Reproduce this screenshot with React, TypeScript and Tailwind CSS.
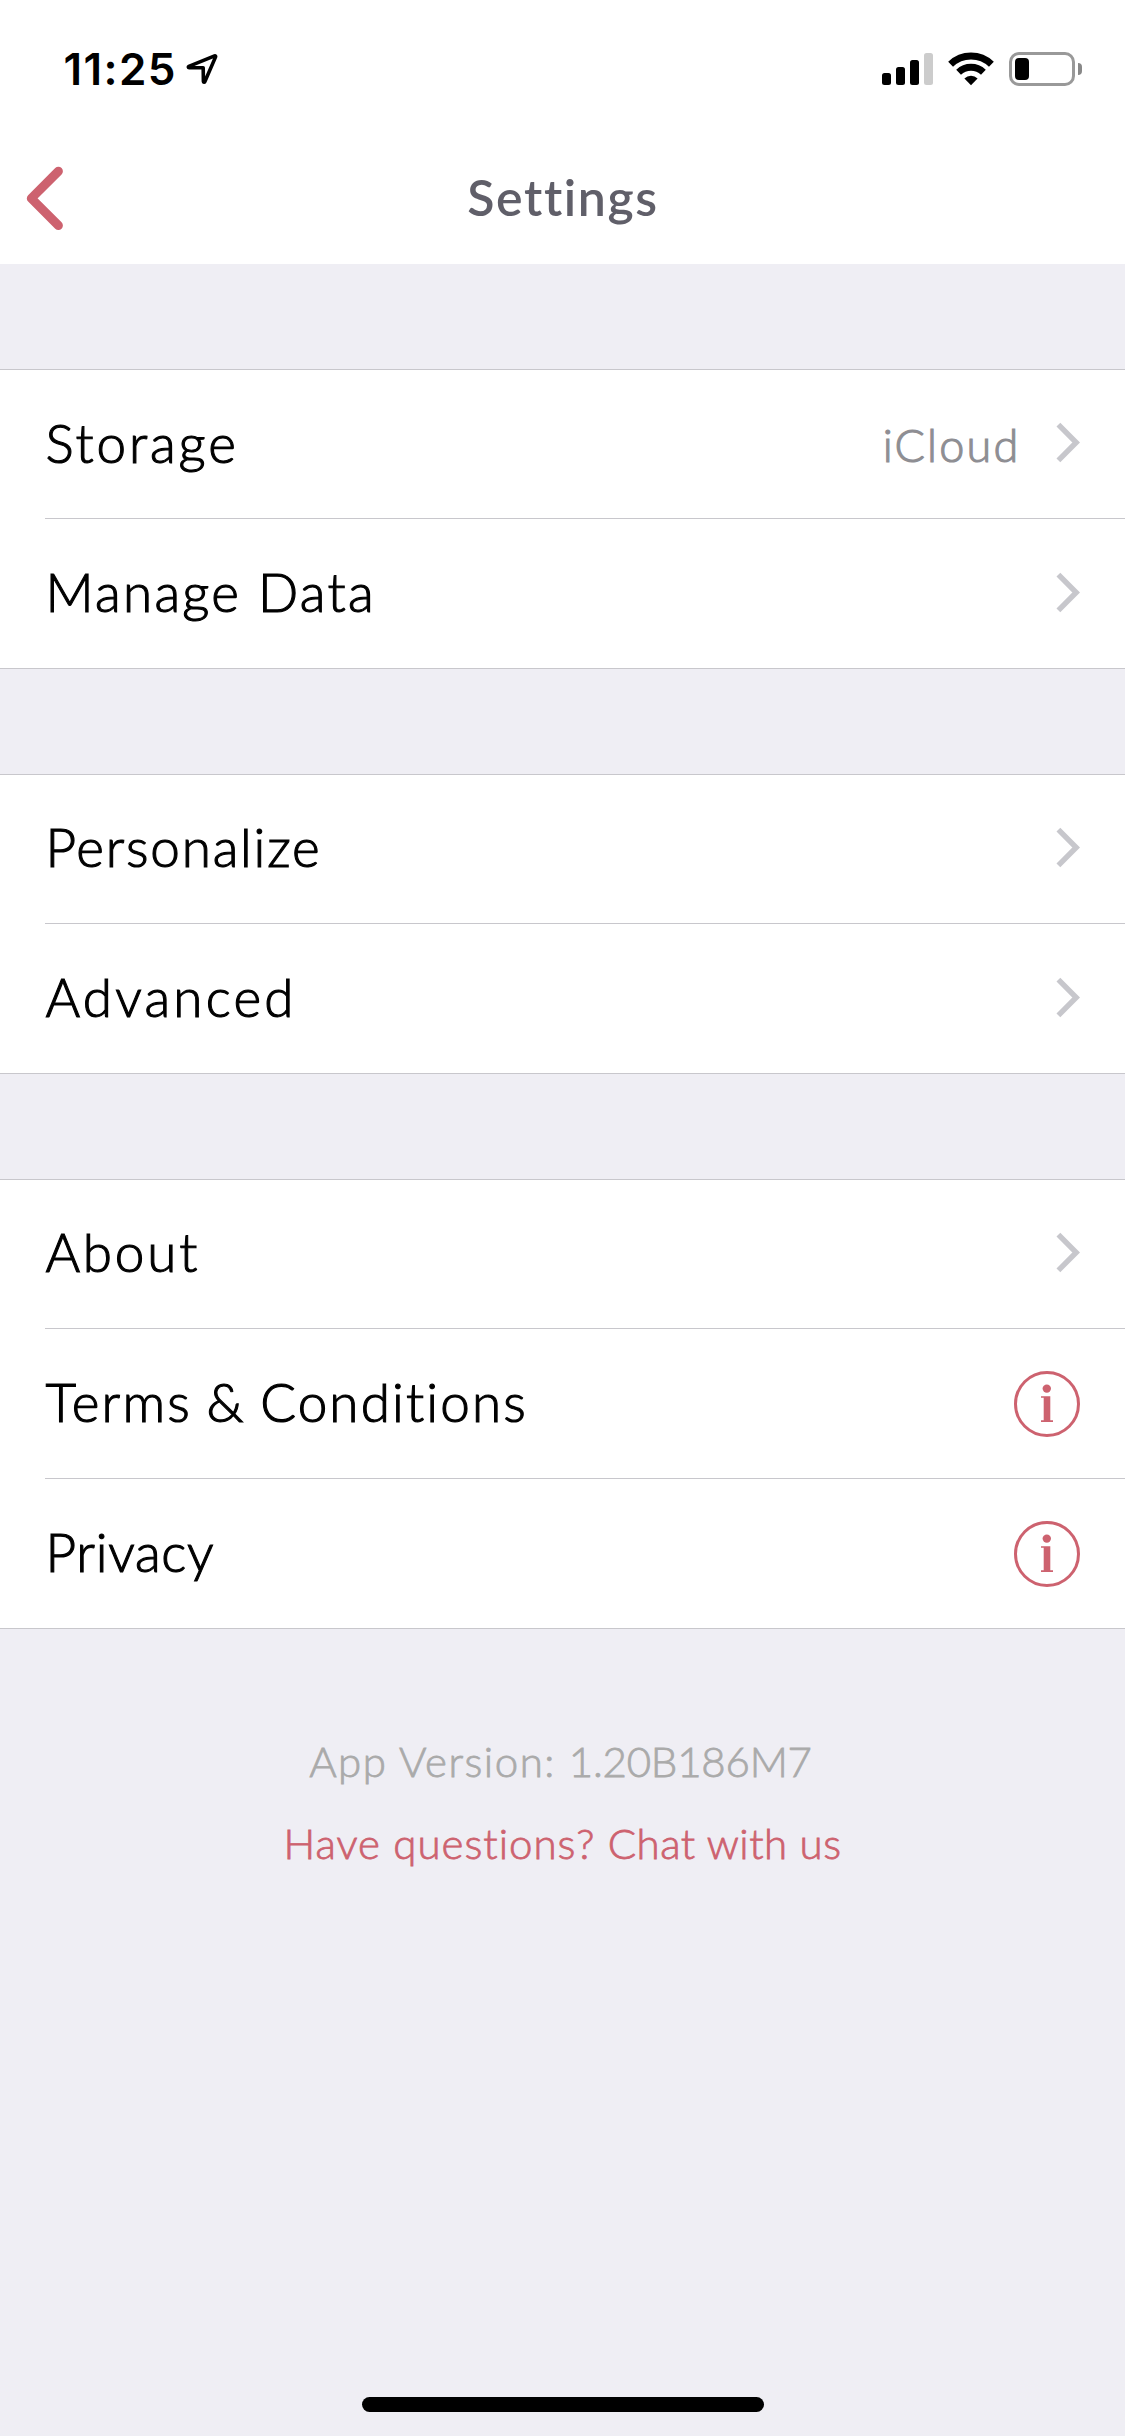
type Accessory = 'chevron' | 'info';

interface Item {
  label: string;
  labelClass: string;
  height: string;
  detail?: string;
  accessory: Accessory;
  accessoryClass: string;
}

const groups: Item[][] = [
  [
    { label: 'Storage', labelClass: 'tracking-[2.9px] leading-[145px]', height: 'h-[148px]', detail: 'iCloud', accessory: 'chevron', accessoryClass: 'mt-[52px]' },
    { label: 'Manage Data', labelClass: 'tracking-[2.3px] leading-[145px]', height: 'h-[149px]', accessory: 'chevron', accessoryClass: 'mt-[53px]' },
  ],
  [
    { label: 'Personalize', labelClass: 'tracking-[1.8px] leading-[143px]', height: 'h-[148px]', accessory: 'chevron', accessoryClass: 'mt-[52px]' },
    { label: 'Advanced', labelClass: 'tracking-[3.2px] leading-[145px]', height: 'h-[149px]', accessory: 'chevron', accessoryClass: 'mt-[53px]' },
  ],
  [
    { label: 'About', labelClass: 'tracking-[2.8px] leading-[143px]', height: 'h-[148px]', accessory: 'chevron', accessoryClass: 'mt-[52px]' },
    { label: 'Terms & Conditions', labelClass: 'tracking-[2.15px] [word-spacing:-2px] leading-[145px]', height: 'h-[149px]', accessory: 'info', accessoryClass: 'mt-[42px]' },
    { label: 'Privacy', labelClass: 'tracking-[0.7px] leading-[145px]', height: 'h-[149px]', accessory: 'info', accessoryClass: 'mt-[42px]' },
  ],
];

function Chevron({ className }: { className: string }) {
  return (
    <svg className={className} width="24" height="41" viewBox="0 0 24 41" fill="none" stroke="#c7c7cc" strokeWidth="5.4">
      <path d="M2.4 2.7 20.2 20.5 2.4 38.3" />
    </svg>
  );
}

function Info({ className }: { className: string }) {
  return (
    <svg className={className} width="66" height="66" viewBox="0 0 66 66" fill="#cd626f">
      <circle cx="33" cy="33" r="31.5" fill="none" stroke="#cd626f" strokeWidth="3" />
      <circle cx="32.8" cy="17.6" r="4.2" />
      <path d="M27 25.3h9.3V49.2H39V51H27v-1.8h2.7V26.8H27z" />
    </svg>
  );
}

function StatusBar() {
  return (
    <div className="flex h-[132px] items-start pl-[63.5px] pr-[43px]">
      <div className="pt-[15px] font-['Inter',sans-serif] text-[44px] font-semibold leading-[108px] tracking-[1.4px] text-black">11:25</div>
      <svg className="ml-[9px] mt-[53px]" width="32" height="32" viewBox="0 0 32 32" fill="none" stroke="#000" strokeWidth="3.6" strokeLinejoin="round">
        <path d="M28.6 2.9 2.8 13.4c-.8.4-.6 1.3.3 1.3l14.1.1.2 13.7c0 .9 1 1 1.4.2L29.6 3.9c.3-.7-.3-1.3-1-1z" />
      </svg>
      <div className="ml-auto mt-[52px] flex items-end">
        <div className="mb-px flex items-end gap-[5px]">
          <div className="h-[12px] w-[9px] rounded-[2.5px] bg-black" />
          <div className="h-[18px] w-[9px] rounded-[2.5px] bg-black" />
          <div className="h-[25px] w-[9px] rounded-[2.5px] bg-black" />
          <div className="h-[32px] w-[9px] rounded-[2.5px] bg-[#cccccc]" />
        </div>
        <svg className="ml-[15px]" width="46" height="34" viewBox="0 0 46 34" fill="none" stroke="#000" strokeWidth="7">
          <path d="M2.6 12.2a29.4 29.4 0 0 1 40.8 0" />
          <path d="M10.6 20.2a18.2 18.2 0 0 1 24.8 0" />
          <path d="M23 33.2 16.4 26.4a9.6 9.6 0 0 1 13.2 0z" fill="#000" stroke="none" />
        </svg>
        <div className="ml-[15px] flex items-center gap-[3px]">
          <div className="h-[34px] w-[66px] rounded-[10px] border-3 border-[#999999] p-[3px]">
            <div className="h-[22px] w-[14px] rounded-[4px] bg-black" />
          </div>
          <div className="h-[12px] w-[4px] rounded-r-full bg-[#888888]" />
        </div>
      </div>
    </div>
  );
}

function Row({ item }: { item: Item }) {
  return (
    <div className={`flex items-start pl-[45.5px] pr-[45px] ${item.height}`}>
      <span className={`flex-1 text-[53px] text-black ${item.labelClass}`}>{item.label}</span>
      {item.detail && (
        <span className="mr-[35.5px] text-[45px] leading-[151px] tracking-[2.2px] text-[#8e8e93]">{item.detail}</span>
      )}
      {item.accessory === 'chevron' ? <Chevron className={item.accessoryClass} /> : <Info className={item.accessoryClass} />}
    </div>
  );
}

export default function App() {
  return (
    <div className="flex h-[2436px] w-[1125px] flex-col overflow-hidden bg-[#efeef4] font-['Lato',sans-serif] font-light">
      <header className="h-[264px] bg-white">
        <StatusBar />
        <div className="flex h-[132px] items-start">
          <svg className="ml-[26px] mt-[34px]" width="38" height="65" viewBox="0 0 38 65" fill="none" stroke="#cd626f" strokeWidth="9" strokeLinecap="round" strokeLinejoin="round">
            <path d="M32.4 5.3 5.3 32.4l27.1 27.1" />
          </svg>
          <h1 className="-ml-[63px] flex-1 text-center text-[50px] font-semibold leading-[131px] tracking-[1.6px] text-[#605f69]">Settings</h1>
        </div>
      </header>

      <main className="flex flex-col gap-[105px] pt-[105px] [-webkit-text-stroke:1.1px_currentColor]">
        {groups.map((group, g) => (
          <section key={g} className="border-y border-[#c8c7cc] bg-white">
            {group.map((item, i) => (
              <div key={item.label}>
                {i > 0 && <div className="ml-[45px] h-px bg-[#c8c7cc]" />}
                <Row item={item} />
              </div>
            ))}
          </section>
        ))}
      </main>

      <footer className="mt-[91px] flex flex-1 flex-col items-center text-[42px] leading-[82px] [-webkit-text-stroke:0.8px_currentColor]">
        <p className="whitespace-pre pr-[4px] text-[#aaaaaa]">
          <span className="tracking-[1.5px]">App Version: </span>
          <span className="tracking-[-0.2px]">1.20B186M7</span>
        </p>
        <p className="whitespace-pre text-[#cd626f]">
          <span className="tracking-[1px]">Have questions? </span>
          <span className="tracking-[0.5px]">Chat with us</span>
        </p>
        <div className="mb-[24px] mt-auto h-[15px] w-[402px] rounded-full bg-black" />
      </footer>
    </div>
  );
}
